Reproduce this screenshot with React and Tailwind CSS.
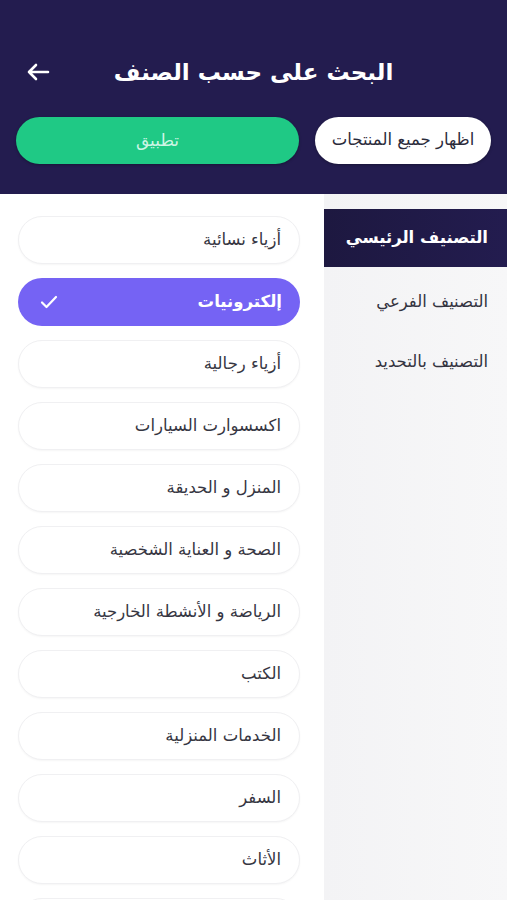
import React from 'react';

const categories = [
  'أزياء نسائية',
  'إلكترونيات',
  'أزياء رجالية',
  'اكسسوارت السيارات',
  'المنزل و الحديقة',
  'الصحة و العناية الشخصية',
  'الرياضة و الأنشطة الخارجية',
  'الكتب',
  'الخدمات المنزلية',
  'السفر',
  'الأثاث',
  '',
];

const tabs = ['التصنيف الرئيسي', 'التصنيف الفرعي', 'التصنيف بالتحديد'];

export default function App() {
  const selected = 1;

  return (
    <div
      dir="rtl"
      className="w-[507px] h-[900px] overflow-hidden bg-white font-['DejaVu_Sans',sans-serif]"
    >
      {/* Header */}
      <div className="bg-[#231c4f] h-[194px] px-[16px] pt-[55px]">
        <div className="relative flex items-center justify-center h-[34px]">
          <h1 className="text-white text-[23px] font-bold">البحث على حسب الصنف</h1>
          <svg
            className="absolute left-[10px] top-[8px]"
            width="24"
            height="18"
            viewBox="0 0 24 18"
            fill="none"
            stroke="white"
            strokeWidth="2.6"
            strokeLinecap="round"
            strokeLinejoin="round"
          >
            <path d="M22 9H3M10 2L3 9l7 7" />
          </svg>
        </div>
        <div className="flex gap-[16px] mt-[28px]">
          <button className="w-[176px] h-[47px] rounded-full bg-white text-[#2b2b3b] text-[16.5px] shadow-[0_1px_3px_rgba(0,0,0,0.3)]">
            اظهار جميع المنتجات
          </button>
          <button className="flex-1 h-[47px] rounded-full bg-[#1fc985] text-[#cdf5e4] text-[17px] shadow-[0_1px_3px_rgba(0,0,0,0.3)]">
            تطبيق
          </button>
        </div>
      </div>

      {/* Body */}
      <div className="flex h-[706px]">
        {/* Sidebar */}
        <div className="w-[183px] shrink-0 bg-gradient-to-l from-[#f7f7f8] to-[#f3f3f5] pt-[15px]">
          {tabs.map((t, i) =>
            i === 0 ? (
              <div
                key={t}
                className="h-[58px] mb-[5px] flex items-center pr-[19px] bg-gradient-to-l from-[#231c4f] to-[#1d1840] text-white text-[16.5px] font-bold"
              >
                {t}
              </div>
            ) : (
              <div
                key={t}
                className="h-[60px] flex items-center pr-[19px] text-[#33333f] text-[16.5px]"
              >
                {t}
              </div>
            )
          )}
        </div>

        {/* Category list */}
        <div className="flex-1 pt-[22px] pr-[24px] pl-[18px] flex flex-col gap-[14px]">
          {categories.map((c, i) =>
            i === selected ? (
              <div
                key={i}
                className="h-[48px] shrink-0 rounded-full bg-[#7563f4] flex items-center justify-between pr-[18px] pl-[22px] text-white text-[16.5px] font-bold"
              >
                <span>{c}</span>
                <svg
                  width="18"
                  height="14"
                  viewBox="0 0 18 14"
                  fill="none"
                  stroke="white"
                  strokeWidth="2.2"
                  strokeLinecap="round"
                  strokeLinejoin="round"
                >
                  <path d="M2 7.5l4.5 4.5L16 2" />
                </svg>
              </div>
            ) : (
              <div
                key={i}
                className="h-[48px] shrink-0 rounded-full bg-white border border-[#f0f0f2] shadow-[0_1px_2px_rgba(0,0,0,0.04)] flex items-center pr-[18px] text-[#363642] text-[16.5px]"
              >
                {c}
              </div>
            )
          )}
        </div>
      </div>
    </div>
  );
}
